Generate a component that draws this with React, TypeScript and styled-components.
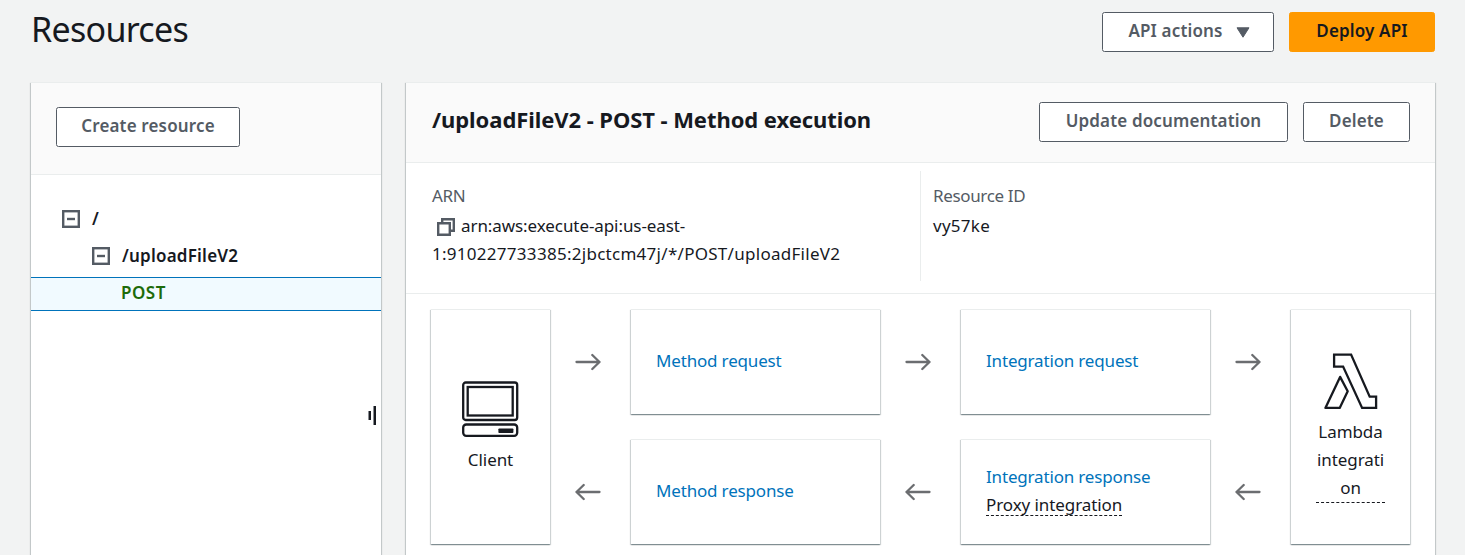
import React from "react";
import styled, { createGlobalStyle } from "styled-components";

const GlobalStyle = createGlobalStyle`
  * { box-sizing: border-box; }
  body {
    margin: 0;
    height: 555px;
    overflow: hidden;
    background: #f2f3f3;
    color: #16191f;
    font-family: "Noto Sans", sans-serif;
    font-size: 17px;
    line-height: 28px;
    letter-spacing: -0.08px;
  }
`;

const Page = styled.div`
  display: flex;
  flex-direction: column;
  width: 1465px;
  height: 555px;
  overflow: hidden;
  padding: 0 30px 0 31px;
`;

const TopBar = styled.header`
  display: flex;
  justify-content: space-between;
  height: 82px;
  flex: none;
  padding-top: 12px;
`;

const PageTitle = styled.h1`
  margin: -5px 0 0;
  font-size: 34px;
  font-weight: 400;
  line-height: 45px;
  letter-spacing: -0.7px;
`;

const Actions = styled.div`
  display: flex;
  gap: 15px;
`;

const Button = styled.button<{ $width: number; $primary?: boolean }>`
  display: flex;
  align-items: center;
  justify-content: center;
  gap: 13px;
  width: ${(p) => p.$width}px;
  height: 40px;
  padding: 0 0 3px;
  border: 1px solid ${(p) => (p.$primary ? "#ff9900" : "#545b64")};
  border-radius: 2.5px;
  background: ${(p) => (p.$primary ? "#ff9900" : "#ffffff")};
  color: ${(p) => (p.$primary ? "#16191f" : "#545b64")};
  font-family: inherit;
  font-size: 17px;
  font-weight: 600;
  line-height: 28px;
  letter-spacing: 0.15px;
  white-space: nowrap;
`;

const CaretIcon = styled.svg`
  margin: 3px -2px 0 0;
`;

const Columns = styled.div`
  display: flex;
  gap: 25px;
`;

const Panel = styled.section<{ $width: number }>`
  position: relative;
  width: ${(p) => p.$width}px;
  height: 620px;
  flex: none;
  background: #ffffff;
  border-top: 1px solid #eaeded;
  box-shadow: 0 1px 1px 0 rgba(0, 28, 36, 0.3), 1px 1px 1px 0 rgba(0, 28, 36, 0.15),
    -1px 1px 1px 0 rgba(0, 28, 36, 0.15);
`;

const PanelHeader = styled.div<{ $height: number }>`
  display: flex;
  align-items: flex-start;
  justify-content: space-between;
  height: ${(p) => p.$height}px;
  padding: ${(p) => (p.$height > 85 ? 24 : 19)}px 25px 0;
  background: #fafafa;
  border-bottom: 1px solid #eaeded;
`;

const PanelTitle = styled.h2`
  margin: 2px 0 0 1px;
  font-size: 22px;
  font-weight: 700;
  line-height: 30px;
  letter-spacing: -0.07px;
`;

const Tree = styled.div`
  padding-top: 27px;
`;

const TreeRow = styled.div<{ $level: number }>`
  display: flex;
  align-items: center;
  gap: 12px;
  height: ${(p) => (p.$level === 0 ? 34 : 41)}px;
  padding-left: ${(p) => 31 + p.$level * 30}px;
  padding-bottom: ${(p) => p.$level}px;
  font-weight: 600;
  letter-spacing: 0.22px;
`;

const SelectedRow = styled.div`
  height: 34px;
  padding-left: 90px;
  border: solid #0073bb;
  border-width: 1px 0;
  background: #f1faff;
  color: #1d6b0a;
  font-weight: 600;
  line-height: 30px;
  letter-spacing: 0.5px;
`;

const ResizeHandle = styled.div`
  position: absolute;
  left: 337px;
  top: 323px;
  display: flex;
  align-items: center;
  gap: 2px;
`;

const HandleBar = styled.span<{ $height: number }>`
  width: 3px;
  height: ${(p) => p.$height}px;
  background: #16191f;
  border-left: 1px solid #8a8d92;
`;

const Details = styled.div`
  display: flex;
  height: 131px;
  padding: 8px 25px 0;
  border-bottom: 1px solid #eaeded;
`;

const DetailColumn = styled.dl<{ $divided?: boolean }>`
  margin: 0;
  width: ${(p) => (p.$divided ? 490 : 489)}px;
  height: 110px;
  padding: 11px 0 0 ${(p) => (p.$divided ? 12 : 1)}px;
  border-left: ${(p) => (p.$divided ? "1px solid #eaeded" : "none")};
`;

const Term = styled.dt`
  margin-bottom: 2px;
  color: #545b64;
  letter-spacing: -0.35px;
`;

const Value = styled.dd`
  margin: 0;
`;

const DigitRun = styled.span`
  letter-spacing: 0.28px;
`;

const Flow = styled.div`
  display: grid;
  grid-template-columns: 119px 81px 249px 81px 249px 81px 119px;
  grid-template-rows: 105px 105px;
  row-gap: 25px;
  padding: 15px 25px 0;
`;

const Card = styled.div`
  display: flex;
  flex-direction: column;
  justify-content: center;
  align-items: flex-start;
  padding: 0 25px 2px;
  background: #ffffff;
  border-top: 1px solid #eaeded;
  box-shadow: 0 1px 1px 0 rgba(0, 28, 36, 0.3), 1px 1px 1px 0 rgba(0, 28, 36, 0.15),
    -1px 1px 1px 0 rgba(0, 28, 36, 0.15);
`;

const EndpointCard = styled(Card)<{ $column: number }>`
  grid-area: 1 / ${(p) => p.$column} / span 2;
  align-items: center;
  padding: 0 25px;
`;

const StageLink = styled.a`
  color: #0073bb;
  text-decoration: none;
  letter-spacing: -0.17px;
`;

const DashedNote = styled.span`
  height: 25px;
  margin-bottom: 3px;
  border-bottom: 1px dashed #16191f;
`;

const LambdaLabel = styled.span`
  width: 69px;
  margin-top: 6px;
  text-align: center;
  border-bottom: 1px dashed #16191f;
`;

const ArrowCell = styled.div`
  display: flex;
  align-items: center;
  justify-content: center;
  padding-right: 6px;
`;

const CopyGlyph = styled.svg`
  margin: 0 6px 0 5px;
  vertical-align: -4px;
`;

const ClientLabel = styled.span`
  margin-top: 6px;
`;

function Collapse() {
  return (
    <svg width="18" height="18" viewBox="0 0 18 18" fill="none" stroke="#545b64" strokeWidth="2.4">
      <rect x="1.2" y="1.2" width="15.6" height="15.6" />
      <path d="M5 9h8" />
    </svg>
  );
}

function Copy() {
  return (
    <CopyGlyph width="18" height="18" viewBox="0 0 18 18" fill="none" stroke="#545b64" strokeWidth="2.4">
      <path d="M1.2 5.2h11.6v11.6H1.2z" />
      <path d="M5.2 5V1.2h11.6v11.6H13" />
    </CopyGlyph>
  );
}

function Arrow({ back }: { back?: boolean }) {
  return (
    <ArrowCell>
      <svg width="26" height="18" viewBox="0 0 26 18" fill="none" stroke="#6b6d70" strokeWidth="2.3" strokeLinecap="round" strokeLinejoin="round">
        <path d={back ? "M24.5 9H1.5M8.7 2 1.5 9l7.2 7" : "M1.5 9h23M17.3 2l7.2 7-7.2 7"} />
      </svg>
    </ArrowCell>
  );
}

function Computer() {
  return (
    <svg width="60" height="60" viewBox="0.8 0.5 60 60" fill="none" stroke="#16191f" strokeWidth="2.3">
      <rect x="3" y="3" width="54" height="37.5" rx="2.5" />
      <rect x="7.5" y="7.5" width="45" height="28.5" />
      <rect x="3" y="45" width="54" height="11.3" rx="3" />
      <rect x="38.2" y="49" width="15" height="4.6" rx="0.8" fill="#16191f" stroke="none" />
    </svg>
  );
}

function Lambda() {
  return (
    <svg width="60" height="60" viewBox="0.6 0.4 60 60" fill="none" stroke="#16191f" strokeWidth="2.3">
      <path d="M13.7 3h17l18.6 42h6.4v11.3h-14L22.7 15h-9z" />
      <path d="M19.7 25.3l7.6 14.4-8 16.6H5z" strokeLinejoin="round" />
    </svg>
  );
}

export default function App() {
  return (
    <>
      <GlobalStyle />
      <Page>
        <TopBar>
          <PageTitle>Resources</PageTitle>
          <Actions>
            <Button $width={172}>
              API actions
              <CaretIcon width="14" height="11" viewBox="0 0 14 11">
                <path d="M1 .8h12L7 10.2z" fill="#545b64" stroke="#545b64" strokeLinejoin="round" />
              </CaretIcon>
            </Button>
            <Button $width={146} $primary>Deploy API</Button>
          </Actions>
        </TopBar>
        <Columns>
          <Panel $width={350}>
            <PanelHeader $height={92}>
              <Button $width={184}>Create resource</Button>
            </PanelHeader>
            <Tree>
              <TreeRow $level={0}><Collapse />/</TreeRow>
              <TreeRow $level={1}><Collapse />/uploadFileV2</TreeRow>
              <SelectedRow>POST</SelectedRow>
            </Tree>
            <ResizeHandle>
              <HandleBar $height={9} />
              <HandleBar $height={19} />
            </ResizeHandle>
          </Panel>
          <Panel $width={1029}>
            <PanelHeader $height={80}>
              <PanelTitle>/uploadFileV2 - POST - Method execution</PanelTitle>
              <Actions>
                <Button $width={249}>Update documentation</Button>
                <Button $width={107}>Delete</Button>
              </Actions>
            </PanelHeader>
            <Details>
              <DetailColumn>
                <Term>ARN</Term>
                <Value>
                  <Copy />arn:aws:execute-api:us-east-
                  <br />
                  <DigitRun>1:910227733385:2jbctcm47j/*/POST/uploadFileV2</DigitRun>
                </Value>
              </DetailColumn>
              <DetailColumn $divided>
                <Term>Resource ID</Term>
                <Value><DigitRun>vy57ke</DigitRun></Value>
              </DetailColumn>
            </Details>
            <Flow>
              <EndpointCard $column={1}>
                <Computer />
                <ClientLabel>Client</ClientLabel>
              </EndpointCard>
              <Arrow />
              <Card><StageLink>Method request</StageLink></Card>
              <Arrow />
              <Card><StageLink>Integration request</StageLink></Card>
              <Arrow />
              <EndpointCard $column={7}>
                <Lambda />
                <LambdaLabel>Lambda integrati<wbr />on</LambdaLabel>
              </EndpointCard>
              <Arrow back />
              <Card><StageLink>Method response</StageLink></Card>
              <Arrow back />
              <Card>
                <StageLink>Integration response</StageLink>
                <DashedNote>Proxy integration</DashedNote>
              </Card>
              <Arrow back />
            </Flow>
          </Panel>
        </Columns>
      </Page>
    </>
  );
}
